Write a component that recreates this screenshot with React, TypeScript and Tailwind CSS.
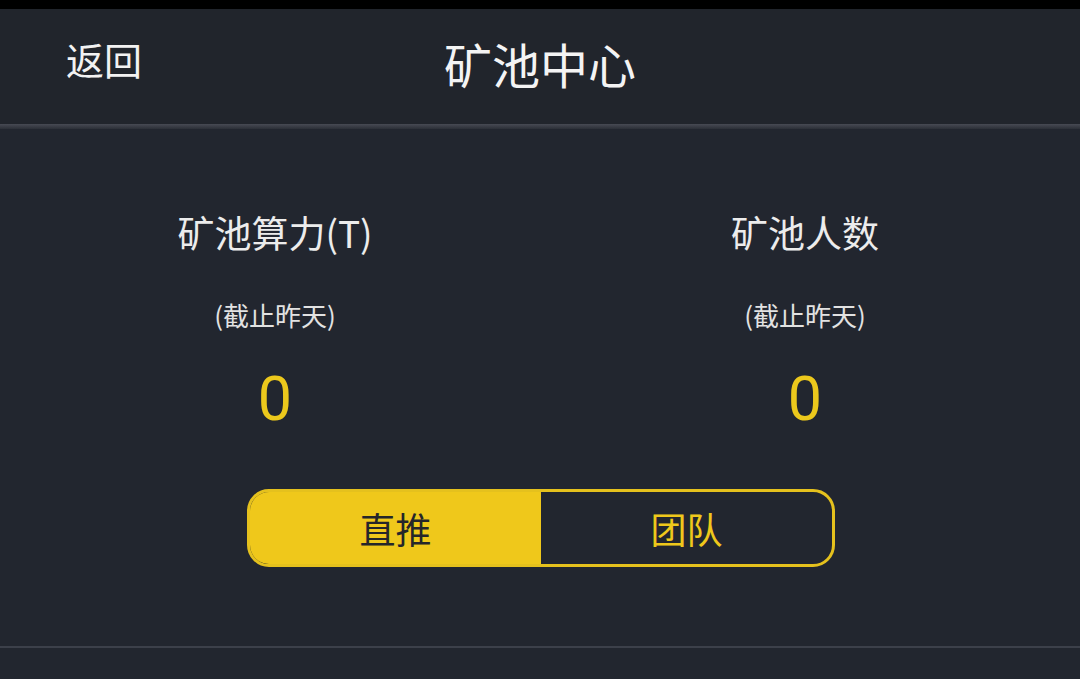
import React, { useState } from 'react';

const font = { fontFamily: '"Noto Sans CJK SC", "Noto Sans", sans-serif' };

const App: React.FC = () => {
  const [tab, setTab] = useState<'direct' | 'team'>('direct');

  const stats = [
    { title: '矿池算力(T)', value: 0 },
    { title: '矿池人数', value: 0 },
  ];

  return (
    <div className="w-[1080px] h-[679px] bg-[#22262f] flex flex-col overflow-hidden" style={font}>
      <div className="h-[9px] bg-black shrink-0" />
      <div className="h-[115px] bg-[#21252c] relative flex items-center justify-center shrink-0">
        <button className="absolute left-[66px] top-[31px] text-[38px] text-[#f2f2f2] leading-none">返回</button>
        <h1 className="text-[48px] text-[#f4f4f4] leading-none mt-[-8px]">矿池中心</h1>
      </div>
      <div className="h-[5px] bg-gradient-to-b from-[#474a53] to-[#2c3038] shrink-0" />

      <div className="flex pt-[83px]">
        {stats.map((s, i) => (
          <div key={i} className={`flex-1 flex flex-col items-center ${i === 0 ? 'pl-[10px]' : 'pr-[10px]'}`}>
            <div className="text-[37px] text-[#ececec] leading-[40px]">{s.title}</div>
            <div className="text-[26px] text-[#e2e2e2] leading-[30px] mt-[48px]">(截止昨天)</div>
            <div className="text-[61px] text-[#ecc81c] leading-[70px] mt-[34px]" style={{ fontFamily: 'Roboto, sans-serif' }}>
              {s.value}
            </div>
          </div>
        ))}
      </div>

      <div className="flex justify-center mt-[55px]">
        <div className="w-[588px] h-[78px] ml-[2px] rounded-[22px] border-[3px] border-[#e5c11d] overflow-hidden flex">
          <button
            onClick={() => setTab('direct')}
            className={`flex-1 text-[36px] ${tab === 'direct' ? 'bg-[#efc81b] text-[#25262a]' : 'text-[#efc81b]'}`}
          >
            直推
          </button>
          <button
            onClick={() => setTab('team')}
            className={`flex-1 text-[36px] ${tab === 'team' ? 'bg-[#efc81b] text-[#25262a]' : 'text-[#efc81b]'}`}
          >
            团队
          </button>
        </div>
      </div>

      <div className="mt-[79px] h-[2px] bg-[#3c404a] shrink-0" />
    </div>
  );
};

export default App;
